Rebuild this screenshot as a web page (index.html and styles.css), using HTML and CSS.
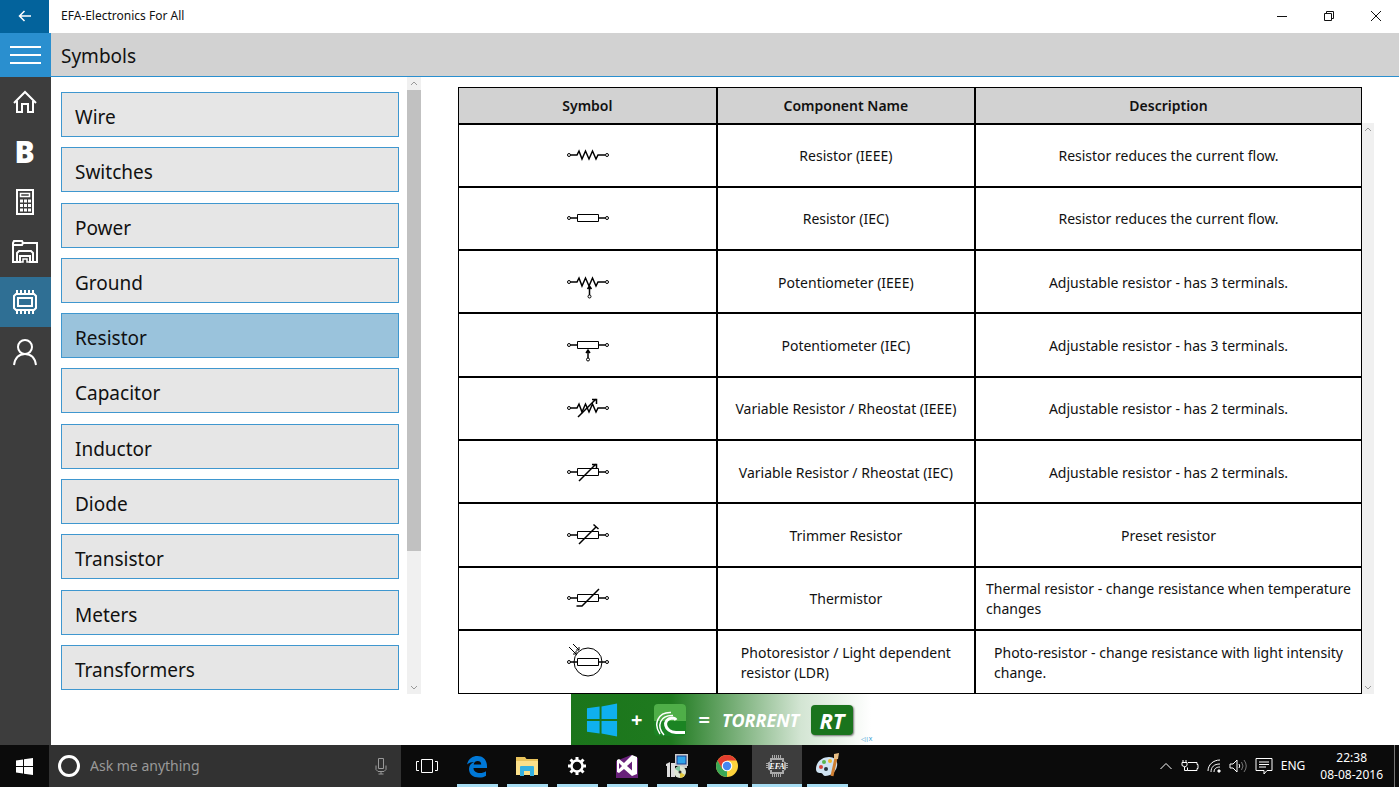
FILE: index.html
```html
<!DOCTYPE html>
<html lang="en">
<head>
    <meta charset="utf-8">
    <meta name="viewport" content="width=device-width, initial-scale=1">
    <title>EFA-Electronics For All</title>
    <link rel="stylesheet" href="styles.css">
</head>
<body>
<div class="desktop">
    <header class="titlebar">
        <button class="back" aria-label="Back"><svg width="14" height="12" viewBox="0 0 14 12"><path d="M13 6H1.500M6.500 1L1.500 6l5 5"/></svg></button>
        <span class="app-name">EFA-Electronics For All</span>
        <button class="win-btn" aria-label="Minimize"><svg width="12" height="12" viewBox="0 0 12 12"><path d="M1 6.500h10"/></svg></button>
        <button class="win-btn" aria-label="Restore"><svg width="12" height="12" viewBox="0 0 12 12"><path d="M1.500 3.500h7v7h-7zM3.500 3.500v-2h7v7h-2"/></svg></button>
        <button class="win-btn" aria-label="Close"><svg width="12" height="12" viewBox="0 0 12 12"><path d="M1 1l10 10M11 1L1 11"/></svg></button>
    </header>

    <div class="app">
        <nav class="side">
            <button class="menu" aria-label="Menu"><svg width="31" height="20" viewBox="0 0 31 20"><path d="M0 2h31M0 10h31M0 18h31"/></svg></button>
            <a href="#home" class="side-link" aria-label="Home"><svg width="26" height="26" viewBox="0 0 26 26"><path d="M2 14L13 3l11 11M5 12v11h5v-8h6v8h5V12"/></svg></a>
            <a href="#basics" class="side-link side-b">B</a>
            <a href="#calc" class="side-link" aria-label="Calculators"><svg width="26" height="28" viewBox="0 0 26 28"><path d="M5 2h16v24H5z"/><path class="thin" d="M8.500 5.500h9v3h-9z"/><path class="dots" d="M8 13h11M8 17.500h11M8 22h11"/></svg></a>
            <a href="#files" class="side-link" aria-label="Files"><svg width="28" height="26" viewBox="0 0 28 26"><path d="M6 23H2V4l1-2h8l1 2h14v19h-4M2 6h9l1-2"/><path d="M6 23V14l2-2h12l2 2v9h-3v-6H9v6z"/><path class="thin" d="M9 23h3v-3h4v3h3"/></svg></a>
            <a href="#symbols" class="side-link active" aria-label="Symbols"><svg width="26" height="26" viewBox="0 0 26 26"><path d="M4 5h18l2 2v12l-2 2H4l-2-2V7z"/><path d="M6 9h14v8H6z"/><path d="M5 1v4M9 1v4M13 1v4M17 1v4M21 1v4M5 21v4M9 21v4M13 21v4M17 21v4M21 21v4"/></svg></a>
            <a href="#account" class="side-link" aria-label="Account"><svg width="26" height="28" viewBox="0 0 26 28"><circle cx="13" cy="9" r="7"/><path d="M2 27c1-7 5-11 11-11s10 4 11 11"/></svg></a>
        </nav>

        <main class="main">
            <h1 class="page-title">Symbols</h1>
            <div class="columns">
                <div class="categories">
                    <button>Wire</button>
                    <button>Switches</button>
                    <button>Power</button>
                    <button>Ground</button>
                    <button class="selected">Resistor</button>
                    <button>Capacitor</button>
                    <button>Inductor</button>
                    <button>Diode</button>
                    <button>Transistor</button>
                    <button>Meters</button>
                    <button>Transformers</button>
                </div>
                <div class="scroll">
                    <svg width="8" height="5" viewBox="0 0 8 5"><path d="M1 4l3-3 3 3"/></svg>
                    <div class="thumb"></div>
                    <svg width="8" height="5" viewBox="0 0 8 5"><path d="M1 1l3 3 3-3"/></svg>
                </div>
                <div class="table-wrap">
                    <table>
                        <thead>
                        <tr><th class="c-sym">Symbol</th><th class="c-name">Component Name</th><th>Description</th></tr>
                        </thead>
                        <tbody>
                        <tr>
                            <td><svg class="sym" viewBox="0 0 42 38"><use href="#ieee"/></svg></td>
                            <td>Resistor (IEEE)</td><td>Resistor reduces the current flow.</td>
                        </tr>
                        <tr>
                            <td><svg class="sym" viewBox="0 0 42 38"><use href="#iec"/></svg></td>
                            <td>Resistor (IEC)</td><td>Resistor reduces the current flow.</td>
                        </tr>
                        <tr>
                            <td><svg class="sym" viewBox="0 0 42 38"><use href="#ieee"/><path d="M23.500 31v-9M21.500 25l2-3 2 3"/><circle cx="23.500" cy="32.500" r="1.500"/></svg></td>
                            <td>Potentiometer (IEEE)</td><td>Adjustable resistor - has 3 terminals.</td>
                        </tr>
                        <tr>
                            <td><svg class="sym" viewBox="0 0 42 38"><use href="#iec"/><path d="M22 31v-8M20 26l2-3 2 3"/><circle cx="22" cy="32.500" r="1.500"/></svg></td>
                            <td>Potentiometer (IEC)</td><td>Adjustable resistor - has 3 terminals.</td>
                        </tr>
                        <tr>
                            <td><svg class="sym" viewBox="0 0 42 38"><use href="#ieee"/><path d="M12 27L30 9M26 9.500h4.500V14"/></svg></td>
                            <td>Variable Resistor / Rheostat (IEEE)</td><td>Adjustable resistor - has 2 terminals.</td>
                        </tr>
                        <tr>
                            <td><svg class="sym" viewBox="0 0 42 38"><use href="#iec"/><path d="M13 27L30 10M26 10.500h4.500V15"/></svg></td>
                            <td>Variable Resistor / Rheostat (IEC)</td><td>Adjustable resistor - has 2 terminals.</td>
                        </tr>
                        <tr>
                            <td><svg class="sym" viewBox="0 0 42 38"><use href="#iec"/><path d="M13 27L30 10M27.500 7.500l5 4.500"/></svg></td>
                            <td>Trimmer Resistor</td><td>Preset resistor</td>
                        </tr>
                        <tr>
                            <td><svg class="sym" viewBox="0 0 42 38"><use href="#iec"/><path d="M10.500 26H16L33 9"/></svg></td>
                            <td>Thermistor</td><td><span class="lines">Thermal resistor - change resistance when temperature<br>changes</span></td>
                        </tr>
                        <tr>
                            <td><svg class="sym" viewBox="0 0 42 38"><use href="#iec"/><circle cx="22" cy="18" r="14"/><path class="ray" d="M3 3l7 7M10 7v3H7M7 0l6 6M13 3v3h-3"/></svg></td>
                            <td><span class="lines">Photoresistor / Light dependent<br>resistor (LDR)</span></td><td><span class="lines">Photo-resistor - change resistance with light intensity<br>change.</span></td>
                        </tr>
                        </tbody>
                    </table>
                    <div class="scroll idle">
                        <svg width="8" height="5" viewBox="0 0 8 5"><path d="M1 4l3-3 3 3"/></svg>
                        <svg width="8" height="5" viewBox="0 0 8 5"><path d="M1 1l3 3 3-3"/></svg>
                    </div>
                </div>
            </div>
            <a href="#ad" class="ad">
                <svg width="33" height="34" viewBox="0 0 34 34" fill="#0fb0ee"><path d="M1 5l13-2v13H1zM16 3l16-3v16H16zM1 18h13v13L1 29zM16 18h16v16l-16-3z"/></svg>
                <b>+</b>
                <svg width="32" height="32" viewBox="0 0 32 32"><rect width="32" height="32" rx="4" fill="#1b8423"/><path d="M0 17V4q0-4 4-4h24q4 0 4 4v13z" fill="#4fae48"/><g fill="none" stroke="#fff"><path stroke-width="1.500" d="M6 30C-1 20 4 8 17 8.500"/><path stroke-width="1.500" d="M10 31C2 22 6 11 19 11.500"/><path stroke-width="3" d="M31 28.500H22C10 28 8 15 18 14q3 0 4 2"/></g></svg>
                <b>=</b>
                <span class="ad-name">TORRENT</span>
                <span class="ad-rt">RT</span>
                <small>◁|X</small>
            </a>
        </main>
    </div>

    <footer class="taskbar">
        <button class="start" aria-label="Start"><svg width="17" height="17" viewBox="0 0 17 17" fill="#fff"><path d="M0 2.500l7-1V8H0zM8 1.300L17 0v8H8zM0 9h7v6.500l-7-1zM8 9h9v8l-9-1.300z"/></svg></button>
        <label class="search">
            <svg width="24" height="24" viewBox="0 0 24 24"><circle cx="12" cy="12" r="9.500" fill="none" stroke="#fff" stroke-width="3"/></svg>
            <input type="text" placeholder="Ask me anything" aria-label="Ask me anything">
            <svg width="12" height="18" viewBox="0 0 12 18" fill="none" stroke="#999"><path d="M3.500 1.500h5v10h-5zM1 8.500v4l2 2h6l2-2v-4M6 14.500v2.500M3.500 17h5"/></svg>
        </label>
        <button class="taskview" aria-label="Task view"><svg width="22" height="18" viewBox="0 0 22 18" fill="none" stroke="#fff"><path d="M5.500 2.500h11v13h-11zM3 4.500H.500v9H3M19 4.500h2.500v9H19"/></svg></button>
        <button class="task" aria-label="Edge"><svg width="24" height="24" viewBox="0 0 24 24"><path fill="#0078d7" d="M2 10.500C3.500 4.500 7.500 2 12.500 2 19 2 22.500 7 22 14H8.500c0 3.500 3 5 6.500 5 2.300 0 4.500-.700 6-1.800v4.500C19.300 23 17 23.500 14 23.500 8 23.500 4 20 4 15c0-3.200 1.800-5.600 5-7-3 .200-5.300 1-7 2.500zM8.700 10.500h7.500C16.200 8.300 15 7 12.700 7 10.500 7 9 8.500 8.700 10.500z"/></svg></button>
        <button class="task" aria-label="File Explorer"><svg width="24" height="24" viewBox="0 0 24 24"><path fill="#e9c35c" d="M1 3h9l1.500 2H23v16H1z"/><path fill="#fbe08a" d="M1 7h22v14H1z"/><path fill="#35b1e1" d="M5 13q0-1 1-1h12q1 0 1 1v9h-4v-5H9v5H5z"/></svg></button>
        <button class="task" aria-label="Settings"><svg width="20" height="20" viewBox="0 0 20 20" fill="none" stroke="#fff"><circle cx="10" cy="10" r="5.500" stroke-width="2.500"/><path stroke-width="3" d="M10 1v3M10 16v3M1 10h3M16 10h3M3.500 3.500l2.200 2.200M14.300 14.300l2.200 2.200M3.500 16.500l2.200-2.200M14.300 5.700l2.200-2.200"/></svg></button>
        <button class="task" aria-label="Visual Studio"><svg width="24" height="24" viewBox="0 0 24 24"><path fill="#68217a" d="M1 7l15-6 7 3v20H1z"/><path fill="#fff" fill-rule="evenodd" d="M17 1l5 2v17l-5 2-8-7-5 4-2-1V6l2-1 5 4zM4 9v6l3-3zM17 7.500L12 12l5 4.500z"/></svg></button>
        <button class="task" aria-label="Installer"><svg width="26" height="26" viewBox="0 0 26 26"><path fill="#ccc" d="M11 1h13v12H11zM15 13h8v2h-8z"/><path fill="#1c3f8f" d="M12.500 2.500h10v9h-10z"/><path fill="#2fa4ea" d="M13.500 3.500h8v7h-8z"/><path fill="#ddd" d="M2 11l4-2v15H3V13H2zM7 10h4v14H7z"/><circle cx="16" cy="19" r="6" fill="#dfe6d5"/><path fill="#7fc6a0" d="M16 19l-5-3a6 6 0 0 1 5-3z"/><path fill="#e2c83c" d="M16 19l5 3a6 6 0 0 1-5 3z"/><circle cx="16" cy="19" r="1.500" fill="#333"/></svg></button>
        <button class="task" aria-label="Chrome"><svg width="24" height="24" viewBox="0 0 24 24"><circle cx="12" cy="12" r="11" fill="#fdd23c"/><path fill="#e33e2f" d="M2.500 6.500a11 11 0 0 1 19 0H12L7 15z"/><path fill="#3aa757" d="M2.500 6.500L7.200 14.700 12 17l0 6A11 11 0 0 1 2.500 6.500z"/><circle cx="12" cy="12" r="5.300" fill="#fff"/><circle cx="12" cy="12" r="4.200" fill="#4587f0"/></svg></button>
        <button class="task current" aria-label="EFA"><svg width="24" height="24" viewBox="0 0 24 24"><path fill="none" stroke="#aaa" stroke-width="2" d="M6 5h12v3l2 1v6l-2 1v3H6v-3l-2-1V9l2-1z"/><path stroke="#aaa" d="M7.500 1v3M9.500 1v3M11.500 1v3M13.500 1v3M15.500 1v3M7.500 20v3M9.500 20v3M11.500 20v3M13.500 20v3M15.500 20v3M1 9.500h3M1 11.500h3M1 13.500h3M20 9.500h3M20 11.500h3M20 13.500h3"/><path fill="#3d3d3d" d="M5 8h14v8H5z"/><text x="12" y="15" text-anchor="middle" class="efa">EFA</text></svg></button>
        <button class="task" aria-label="Paint"><svg width="26" height="26" viewBox="0 0 26 26"><path fill="#cfe3f2" d="M2 16C2 9 8 4 15 4c6 0 9 4 8 9-1 6-6 10-12 10-2 0-2-3-4-3s-5 0-5-4z"/><circle cx="7" cy="14" r="2" fill="#d6443a"/><circle cx="10" cy="9" r="2" fill="#58b44c"/><circle cx="16" cy="8" r="2" fill="#eeb72d"/><circle cx="12" cy="16" r="2" fill="#27343d"/><path stroke="#cf7f32" stroke-width="3" d="M22 5l-4 18"/><path fill="#e5bd83" d="M20 1l5-1-1 6h-4z"/></svg></button>
        <div class="tray">
            <svg width="14" height="14" viewBox="0 0 14 14"><path d="M1.500 10L7 4.500l5.500 5.500"/></svg>
            <svg width="18" height="14" viewBox="0 0 18 14"><path d="M7 3.500h9v2h1v4h-1v2H6.500v-3M2 1v2M5 1v2M1 3.500h5v3l-2 1.500-3-1.500zM3.500 8v3.500h3"/></svg>
            <svg width="14" height="14" viewBox="0 0 14 14"><path d="M1 12C1 6 6 1 13 1M4 13c0-5 3-8 9-8M7 13c0-3 2-5 6-5"/><path d="M11 11h2v2h-2z" fill="#fff"/></svg>
            <svg width="18" height="14" viewBox="0 0 18 14"><path d="M1 5h3l4-4v12L4 9H1zM10 5q1.500 2 0 4"/><path class="dim" d="M12.500 3q3 4 0 8M15 1q4.500 6 0 12"/></svg>
            <svg width="18" height="18" viewBox="0 0 18 18"><path d="M1 1.500h16v12h-5L9 17v-3.500H1zM4 5h10M4 7.500h10M4 10h7"/></svg>
            <span class="lang">ENG</span>
            <time class="clock">22:38<br>08-08-2016</time>
        </div>
    </footer>
</div>

<svg class="defs">
    <defs>
        <g id="ieee"><circle class="pin" cx="3" cy="18" r="1.500"/><circle class="pin" cx="41" cy="18" r="1.500"/><path d="M4.500 18H11l2-4 3 8 3.500-8 3.500 8 3.500-8 3.500 8 2-4h7"/></g>
        <g id="iec"><circle class="pin" cx="3" cy="18" r="1.500"/><circle class="pin" cx="41" cy="18" r="1.500"/><path d="M4.500 18H11M33 18h6.500"/><path class="box" d="M11.500 14.500h21v7h-21z"/></g>
    </defs>
</svg>
</body>
</html>
```
FILE: styles.css
```css
*{box-sizing: border-box;margin: 0;padding: 0;}
body{font: 14px/20px "Noto Sans","Open Sans",sans-serif;color: #111;background: #fff;}
button{border: 0;background: none;font: inherit;color: inherit;}
a{color: inherit;text-decoration: none;}
svg{display: block;flex: none;}
.desktop{display: flex;flex-direction: column;height: 100vh;min-height: 700px;}
.defs{position: absolute;width: 0;height: 0;}

/* title bar */
.titlebar{display: flex;height: 33px;}
.titlebar svg{fill: none;stroke: #111;}
.titlebar button{display: flex;align-items: center;justify-content: center;padding-bottom: 1px;}
.back{width: 49px;background: #03639c;}
.titlebar .back svg{stroke: #fff;stroke-width: 1.5px;}
.app-name{flex: 1;padding-left: 12px;font-size: 12px;line-height: 32px;}
.win-btn{width: 47px;}

.app{display: flex;flex: 1;min-height: 0;}

/* left navigation */
.side{width: 51px;background: #3d3d3d;flex: none;}
.side svg{fill: none;stroke: #fff;stroke-width: 2px;}
.menu,.side-link{display: flex;align-items: center;justify-content: center;width: 100%;padding-right: 2px;}
.menu{height: 44px;padding-right: 0;background: #2a8fcf;}
.side-link{height: 50px;color: #fff;}
.side-link.active{background: #2f6f94;}
.side-b{font: 800 30px/50px "Open Sans",sans-serif;}
.side .thin{stroke-width: 1.5px;}
.side .dots{stroke-width: 3px;stroke-dasharray: 3 1;}

.main{display: flex;flex-direction: column;flex: 1;min-width: 0;}
.page-title{height: 44px;padding-left: 10px;font-size: 19px;font-weight: 400;line-height: 46px;background: #d2d2d2;border-bottom: 1px solid #2a8fcf;}
.columns{display: flex;flex: 1;min-height: 0;}

/* category list */
.categories{display: flex;flex-direction: column;justify-content: space-between;width: 348px;padding: 15px 0 4px 10px;}
.categories button{height: 45px;padding: 5px 13px 0;font-size: 19px;text-align: left;background: #e6e6e6;border: 1px solid #3f97cf;}
.categories .selected{background: #9ac3dc;}
.scroll{display: flex;flex-direction: column;align-items: center;width: 14px;margin-left: 8px;padding: 4px 0;background: #f0f0f0;}
.scroll svg{fill: none;stroke: #999;}
.thumb{width: 100%;height: 461px;margin: 4px 0 auto;background: #c1c1c1;}

/* symbol table */
.table-wrap{display: flex;flex: 1;padding: 10px 25px 0 37px;}
table{flex: 1;width: 100%;height: 100%;border-collapse: collapse;table-layout: fixed;border: 1px solid #000;}
th{height: 36px;padding-top: 2px;font-weight: 600;background: #d2d2d2;}
.c-sym,.c-name{width: 28.6%;}
td{height: 63px;padding-top: 2px;text-align: center;border-top: 2px solid #000;}
th + th,td + td{border-left: 2px solid #000;}
.lines{display: inline-block;text-align: left;white-space: nowrap;}
.sym{width: 42px;height: 38px;margin: 0 auto;overflow: visible;fill: none;stroke: #000;stroke-width: 1.5px;}
.sym circle,.pin,.box,.ray{stroke-width: 1px;}
.scroll.idle{justify-content: space-between;width: 12px;margin: 36px 0 0;flex: none;}

/* ad strip */
.ad{display: flex;align-items: center;align-self: center;gap: 12px;width: 308px;height: 51px;padding-left: 15px;background: linear-gradient(90deg,#1b751b 0,#1f7a1f 100px,#d3e5d3 230px,#fff 300px);color: #fff;}
.ad b{font-size: 20px;}
.ad-name{font: italic 700 18px/24px "Open Sans",sans-serif;}
.ad-rt{padding: 0 8px;border-radius: 4px;background: #1a741d;font: italic 700 22px/30px "Open Sans",sans-serif;box-shadow: 1px 1px 2px #777;}
.ad small{align-self: flex-end;margin-left: -4px;font-size: 6px;line-height: 12px;color: #1993d1;}

/* taskbar */
.taskbar{display: flex;height: 42px;color: #fff;background: #0b0b0b;}
.taskbar button{display: flex;align-items: center;justify-content: center;flex: none;}
.start{width: 49px;}
.search{display: flex;align-items: center;width: 352px;padding: 0 14px 0 8px;background: #323232;}
.search input{flex: 1;min-width: 0;margin-left: 9px;border: 0;outline: 0;background: none;font: inherit;color: #fff;}
.search input::placeholder{color: #999;opacity: 1;}
.taskview{width: 51px;}
.task{width: 50px;background: linear-gradient(#a6dcf2,#a6dcf2) center bottom/41px 3px no-repeat;}
.task.current{background: linear-gradient(#a6dcf2,#a6dcf2) center bottom/100% 3px no-repeat #3d3d3d;}
.efa{font: italic 700 8px "Liberation Serif",serif;fill: #fff;}
.tray{display: flex;align-items: center;gap: 8px;margin-left: auto;margin-right: 4px;border-right: 1px solid #777;padding-right: 11px;font-size: 12px;}
.tray svg{fill: none;stroke: #fff;}
.tray .dim{stroke: #777;}
.clock{margin-left: 7px;line-height: 17px;text-align: center;}
```
